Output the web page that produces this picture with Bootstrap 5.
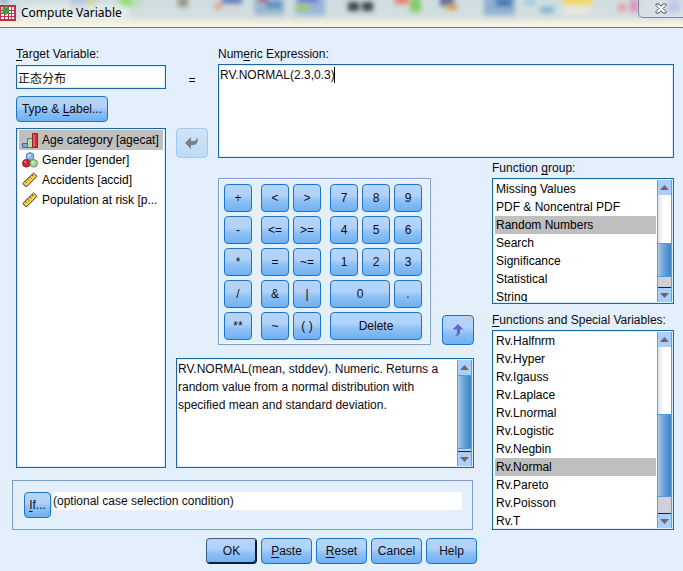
<!DOCTYPE html>
<html lang="en">
<head>
<meta charset="utf-8">
<meta name="viewport" content="width=device-width, initial-scale=1">
<title>Compute Variable</title>
<link href="https://cdn.jsdelivr.net/npm/bootstrap@5.3.0/dist/css/bootstrap.min.css" rel="stylesheet">
<style>
  :root { --edge: #1f64a3; --soft-edge: #7f9fc6; --face-edge: #1c75c9; --ink: #0b0b14; }
  body { background: #e3effb; color: var(--ink); font: 12px/16px "Liberation Sans", "Noto Sans CJK SC", sans-serif; }
  .titlebar { height: 28px; border-bottom: 1px solid #6f7479; background: linear-gradient(#cfdde0 0, #d3dfdf 60%, #f3f2e0 88%, #fbf8e4 100%); }
  .titlebar .scene { inset: 0; width: 100%; height: 100%; }
  .titlebar h1 { font: 12px/18px "Noto Sans", "Open Sans", sans-serif; margin-left: 5px; }
  .close-btn { width: 46px; height: 18px; margin-right: -1px; border: 1px solid #85839a; border-top: 0; border-radius: 0 0 0 5px; background: #dfe3f166; }
  .form-area { display: grid; grid-template-columns: 150px minmax(0, 1fr) 182px; padding: 18px 9px 8px 16px; }
  .col-left { grid-row: 1 / 3; }
  .expr-row { grid-column: 2 / 4; padding-left: 10px; gap: 10px; }
  .mid-part { padding: 20px 18px 0 10px; }
  .right-part { grid-row: 2 / 4; grid-column: 3; padding-top: 2px; }
  .if-panel { grid-column: 1 / 3; margin: 12px 19px 0 -4px; height: 50px; padding: 11px 10px 0 11px; border: 1px solid var(--soft-edge); }
  .box { background: #fff; border: 1px solid var(--edge); box-shadow: inset 0 0 0 1px #d5f0fd; border-radius: 0; }
  .edit { padding: 1px; font: inherit; color: inherit; resize: none; outline: 0; }
  .field-label { margin-bottom: 2px; }
  .target { height: 24px; margin-top: 1px; }
  .expr { height: 94px; line-height: 18px; }
  .caret { left: 116px; top: 3px; width: 1px; height: 16px; background: #000; }
  .face { --bs-btn-color: var(--ink); --bs-btn-hover-color: var(--ink); --bs-btn-border-color: var(--face-edge); --bs-btn-padding-x: 0; --bs-btn-padding-y: 0; --bs-btn-font-size: 12px; --bs-btn-line-height: 16px; --bs-btn-border-radius: 4px;
    height: 26px; background: linear-gradient(#b5d5f8 0, #b0d2fa 40%, #8dbff4 62%, #6db1f2 100%); }
  .face.key { height: 28px; }
  .face.arrow { width: 32px; height: 30px; }
  .face.arrow:disabled { opacity: 1; border-color: #a3c6ec; background: linear-gradient(#d0e3f8, #c0dbf6); }
  .face.primary { border-color: #4b5a78 #0d1b33 #0d1b33 #34608f; box-shadow: inset -1px -1px 0 #0d1b33; }
  .type-btn { width: 92px; margin-top: 7px; }
  .if-btn { width: 27px; }
  .equals { padding-bottom: 40px; }
  .var-list { margin-top: 6px; height: 340px; padding: 1px 2px; }
  .var-list button { height: 20px; padding-left: 3px; gap: 4px; }
  .pick { display: block; width: 100%; border: 0; background: none; text-align: left; white-space: nowrap; overflow: hidden; padding: 0 1px; }
  .pick.on { background: #bfbfbf; }
  .keypad { border: 1px solid var(--soft-edge); box-shadow: inset 0 0 0 1px #f1f8fe; padding: 5px 8px 4px 5px; gap: 9px; }
  .keys { display: grid; gap: 4px; grid-auto-rows: 28px; }
  .keys.one { grid-template-columns: 28px; }
  .keys.two { grid-template-columns: repeat(2, 28px); }
  .keys.three { grid-template-columns: repeat(3, 28px); }
  .span2 { grid-column: span 2; }
  .span3 { grid-column: span 3; }
  .mid-keys { gap: 11px; }
  .help { margin-top: 13px; height: 110px; line-height: 18px; padding: 1px 0 1px 1px; }
  .group-box { height: 126px; padding: 1px 0 1px 2px; }
  .func-box { height: 200px; padding: 1px 0 1px 2px; }
  .pick.fn { height: 18px; line-height: 18px; flex: none; }
  .sbar { width: 15px; margin-left: 1px; margin-right: 1px; border-left: 1px solid #58a3e2; border-right: 1px solid #58a3e2; flex: none; }
  .sbar button { height: 15px; border: 0; padding: 0; background: #a9cffa; display: flex; align-items: center; justify-content: center; flex: none; }
  .sbar .down { border-top: 1px solid #14263c; }
  .sbar .above { background: linear-gradient(90deg, #d7e0ea, #fff 40%); }
  .sbar .thumb { background: linear-gradient(90deg, #a6c9e8, #6fa8dc 40%, #3d83c4); border: 1px solid #4f9be2; border-width: 1px 0; }
  .sbar .below { background: #d0d0da; }
  .g49 { flex: 49 0 0; } .g33 { flex: 33 0 0; } .g10 { flex: 10 0 0; }
  .g68 { flex: 68 0 0; } .g82 { flex: 82 0 0; } .g16 { flex: 16 0 0; } .g2 { flex: 0 0 2px; }
  .second { margin-top: 8px; }
  .cap { margin-bottom: 2px; white-space: nowrap; }
  .cond { height: 18px; line-height: 18px; background: #fff; border: 0; padding: 0; margin-left: 2px; font-size: 12px; color: inherit; min-width: 0; }
  .actions { gap: 4px; padding-bottom: 7px; }
  .actions .face { width: 51px; }
  u { text-underline-offset: 2px; }
</style>
</head>
<body>
<header class="titlebar position-relative overflow-hidden d-flex align-items-start">
  <svg class="scene position-absolute" viewBox="0 0 683 27" preserveAspectRatio="none" aria-hidden="true">
    <defs><filter id="soft" x="-20%" y="-80%" width="140%" height="260%"><feGaussianBlur stdDeviation="2.5"/></filter></defs>
    <g filter="url(#soft)">
      <rect x="0" y="-4" width="8" height="8" fill="#9fb0d0"/>
      <rect x="70" y="-4" width="18" height="18" fill="#b5c9dc"/><rect x="86" y="-2" width="10" height="8" fill="#cfd39a"/>
      <rect x="120" y="-4" width="12" height="11" fill="#90e070"/><rect x="134" y="-2" width="8" height="8" fill="#b8dcb0"/>
      <rect x="178" y="-4" width="10" height="11" fill="#9c9484"/>
      <rect x="215" y="3" width="7" height="6" fill="#e89a88"/><rect x="222" y="-3" width="20" height="7" fill="#5078b8"/><rect x="224" y="4" width="17" height="10" fill="#d8d8dc"/>
      <rect x="254" y="-3" width="30" height="18" fill="#9cb8ce"/><rect x="266" y="2" width="16" height="6" fill="#4e88c8"/><rect x="258" y="-4" width="10" height="6" fill="#b04870"/>
      <rect x="295" y="-3" width="30" height="18" fill="#98b6dc"/><rect x="296" y="4" width="14" height="7" fill="#a0cc50"/><rect x="298" y="-4" width="20" height="6" fill="#5a68d0"/>
      <rect x="348" y="2" width="11" height="9" fill="#394349"/><rect x="362" y="2" width="11" height="9" fill="#394349"/>
      <rect x="395" y="-3" width="14" height="7" fill="#f07868"/><rect x="410" y="-2" width="11" height="14" fill="#80cc68"/>
      <rect x="440" y="-4" width="14" height="10" fill="#587098"/><rect x="446" y="4" width="11" height="6" fill="#d0a058"/>
      <rect x="484" y="-4" width="31" height="19" fill="#8fb0cf"/><rect x="496" y="-1" width="16" height="7" fill="#336eb0"/>
      <rect x="524" y="0" width="12" height="5" fill="#a0c8dc"/><rect x="540" y="7" width="14" height="6" fill="#80b4d0"/>
      <rect x="563" y="-4" width="29" height="9" fill="#f0d860"/><rect x="564" y="6" width="27" height="9" fill="#e8e6de"/>
      <rect x="618" y="4" width="8" height="7" fill="#ec98a4"/><rect x="630" y="0" width="8" height="12" fill="#d890c0"/>
      <rect x="668" y="0" width="12" height="12" fill="#a8b8e4"/>
    </g>
    <rect x="20" y="5" width="110" height="18" rx="8" fill="#f2f5f2" opacity=".55" filter="url(#soft)"/>
  </svg>
  <svg class="position-relative mt-1 flex-shrink-0" width="16" height="18" viewBox="0 0 16 18" aria-hidden="true">
    <rect x="0" y="1" width="16" height="16" fill="#c0304c"/>
    <path fill="#fff" d="M1 3h3v3H1zM5 3h3v3H5zM9 3h2v3H9zM12 3h2v3h-2zM1 7h3v2H1zM5 7h3v2H5zM9 7h2v2H9zM12 7h2v2h-2zM1 10h3v2H1zM5 10h3v2H5zM9 10h2v2H9zM12 10h2v2h-2zM1 13h3v2H1zM5 13h3v2H5zM9 13h2v2H9zM12 13h2v2h-2z"/>
    <path d="M5.500 2v9M1 6.500h9M2.500 3.500l6 6M8.500 3.500l-6 6" stroke="#4b9a3c" stroke-width="1.800"/>
  </svg>
  <h1 class="position-relative mb-0 text-black pt-1">Compute Variable</h1>
  <button class="close-btn position-relative ms-auto p-0 d-flex justify-content-center align-items-center" type="button" aria-label="Close">
    <svg width="12" height="11" viewBox="0 0 12 11" aria-hidden="true"><path d="M1 1h3l2 2.300L8 1h3v1.500L8 5.500l3 3V10H8L6 7.700 4 10H1V8.500l3-3-3-3z" fill="#fff" stroke="#4c5062"/></svg>
  </button>
</header>

<main>
  <form class="form-area">
    <section class="col-left d-flex flex-column align-items-stretch">
      <label class="field-label" for="target"><u>T</u>arget Variable:</label>
      <input id="target" class="box edit target w-100" value="正态分布">
      <button class="btn face type-btn" type="button">Type &amp; <u>L</u>abel...</button>
      <div class="box var-list" role="listbox" aria-label="Variables">
        <button class="pick on d-flex align-items-center" type="button" role="option" aria-selected="true">
          <svg width="16" height="16" viewBox="0 0 16 16" aria-hidden="true"><path d="M.5 11.500h5v4h-5z" fill="#7fa8d8" stroke="#45658f"/><path d="M5.500 6.500h5v9h-5z" fill="#b7dca0" stroke="#5c7e4c"/><path d="M10.500 1.500h5v14h-5z" fill="#d03038" stroke="#8e2030"/><path d="M12 2.500v12" stroke="#f09090"/></svg>
          <span>Age category [agecat]</span></button>
        <button class="pick d-flex align-items-center" type="button" role="option">
          <svg width="16" height="16" viewBox="0 0 16 16" aria-hidden="true"><circle cx="8" cy="4.500" r="3.800" fill="#8db8ee" stroke="#4678b8"/><circle cx="4.300" cy="11.300" r="3.800" fill="#cc2638" stroke="#8e1c2c"/><circle cx="11.700" cy="11.300" r="3.800" fill="#a5d69a" stroke="#5a9254"/><circle cx="7" cy="3.500" r="1.300" fill="#d2e5fc"/><circle cx="3.300" cy="10" r="1" fill="#f08a90"/><circle cx="10.700" cy="10.200" r="1.200" fill="#d9f3d0"/></svg>
          <span>Gender [gender]</span></button>
        <button class="pick d-flex align-items-center" type="button" role="option">
          <svg width="16" height="16" viewBox="0 0 16 16" aria-hidden="true"><path d="M.8 11.500L11.500 1l3.500 3.300L4.300 15z" fill="#fbd04e" stroke="#3c3010"/><path d="M3.500 9.500l1.200 1.200M5.700 7.400l1.200 1.200M7.900 5.200l1.200 1.200M10.100 3l1.200 1.200" stroke="#3c3010"/></svg>
          <span>Accidents [accid]</span></button>
        <button class="pick d-flex align-items-center" type="button" role="option">
          <svg width="16" height="16" viewBox="0 0 16 16" aria-hidden="true"><path d="M.8 11.500L11.500 1l3.500 3.300L4.300 15z" fill="#fbd04e" stroke="#3c3010"/><path d="M3.500 9.500l1.200 1.200M5.700 7.400l1.200 1.200M7.900 5.200l1.200 1.200M10.100 3l1.200 1.200" stroke="#3c3010"/></svg>
          <span>Population at risk [p...</span></button>
      </div>
    </section>

    <section class="expr-row d-flex">
      <div class="d-flex flex-column align-items-center justify-content-end">
        <span class="equals">=</span>
        <button class="btn face arrow d-flex align-items-center justify-content-center" type="button" disabled aria-label="Move variable to expression">
          <svg width="16" height="14" viewBox="0 0 16 14" aria-hidden="true"><path d="M1 7l6-6v4h2.500c2 0 3-1 4-3.500 1 4-.5 7.500-4 7.500H7v4z" fill="#7d7f86"/></svg>
        </button>
      </div>
      <div class="flex-grow-1 d-flex flex-column">
        <label class="field-label" for="expr">Num<u>e</u>ric Expression:</label>
        <div class="position-relative d-flex">
          <textarea id="expr" class="box edit expr w-100">RV.NORMAL(2.3,0.3)</textarea>
          <span class="caret position-absolute"></span>
        </div>
      </div>
    </section>

    <section class="mid-part d-flex flex-column">
      <div class="mid-keys d-flex justify-content-end align-items-end">
        <div class="keypad d-flex">
          <div class="keys one">
            <button class="btn face key" type="button">+</button><button class="btn face key" type="button">-</button><button class="btn face key" type="button">*</button><button class="btn face key" type="button">/</button><button class="btn face key" type="button">**</button>
          </div>
          <div class="keys two">
            <button class="btn face key" type="button">&lt;</button><button class="btn face key" type="button">&gt;</button>
            <button class="btn face key" type="button">&lt;=</button><button class="btn face key" type="button">&gt;=</button>
            <button class="btn face key" type="button">=</button><button class="btn face key" type="button">~=</button>
            <button class="btn face key" type="button">&amp;</button><button class="btn face key" type="button">|</button>
            <button class="btn face key" type="button">~</button><button class="btn face key" type="button">( )</button>
          </div>
          <div class="keys three">
            <button class="btn face key" type="button">7</button><button class="btn face key" type="button">8</button><button class="btn face key" type="button">9</button>
            <button class="btn face key" type="button">4</button><button class="btn face key" type="button">5</button><button class="btn face key" type="button">6</button>
            <button class="btn face key" type="button">1</button><button class="btn face key" type="button">2</button><button class="btn face key" type="button">3</button>
            <button class="btn face key span2" type="button">0</button><button class="btn face key" type="button">.</button>
            <button class="btn face key span3" type="button">Delete</button>
          </div>
        </div>
        <button class="btn face arrow d-flex align-items-center justify-content-center" type="button" aria-label="Insert function">
          <svg width="12" height="14" viewBox="0 0 12 14" aria-hidden="true"><path d="M6 1l5.500 5.500H8V9c0 2.500-2 4-5.500 4C4.500 12 5 11 5 9.500v-3H.5z" fill="#6a5fc8"/></svg>
        </button>
      </div>
      <div class="box help d-flex">
        <p class="mb-0 flex-grow-1">RV.NORMAL(mean, stddev). Numeric. Returns a random value from a normal distribution with specified mean and standard deviation.</p>
        <div class="sbar d-flex flex-column">
          <button type="button" aria-label="Scroll up"><svg width="9" height="5" viewBox="0 0 9 5"><path d="M0 5L4.500 0 9 5z" fill="#6b6670"/></svg></button>
          <div class="thumb g82"></div><div class="below g2"></div>
          <button class="down" type="button" aria-label="Scroll down"><svg width="9" height="5" viewBox="0 0 9 5"><path d="M0 0h9L4.500 5z" fill="#6b6670"/></svg></button>
        </div>
      </div>
    </section>

    <section class="right-part d-flex flex-column">
      <div class="cap">Function <u>g</u>roup:</div>
      <div class="box group-box d-flex">
        <div class="flex-grow-1 overflow-hidden d-flex flex-column" role="listbox" aria-label="Function group">
          <button class="pick fn" type="button" role="option">Missing Values</button>
          <button class="pick fn" type="button" role="option">PDF &amp; Noncentral PDF</button>
          <button class="pick fn on" type="button" role="option" aria-selected="true">Random Numbers</button>
          <button class="pick fn" type="button" role="option">Search</button>
          <button class="pick fn" type="button" role="option">Significance</button>
          <button class="pick fn" type="button" role="option">Statistical</button>
          <button class="pick fn" type="button" role="option">String</button>
        </div>
        <div class="sbar d-flex flex-column">
          <button type="button" aria-label="Scroll up"><svg width="9" height="5" viewBox="0 0 9 5"><path d="M0 5L4.500 0 9 5z" fill="#6b6670"/></svg></button>
          <div class="above g49"></div><div class="thumb g33"></div><div class="below g10"></div>
          <button class="down" type="button" aria-label="Scroll down"><svg width="9" height="5" viewBox="0 0 9 5"><path d="M0 0h9L4.500 5z" fill="#6b6670"/></svg></button>
        </div>
      </div>
      <div class="cap second"><u>F</u>unctions and Special Variables:</div>
      <div class="box func-box d-flex">
        <div class="flex-grow-1 overflow-hidden d-flex flex-column" role="listbox" aria-label="Functions and Special Variables">
          <button class="pick fn" type="button" role="option">Rv.Halfnrm</button>
          <button class="pick fn" type="button" role="option">Rv.Hyper</button>
          <button class="pick fn" type="button" role="option">Rv.Igauss</button>
          <button class="pick fn" type="button" role="option">Rv.Laplace</button>
          <button class="pick fn" type="button" role="option">Rv.Lnormal</button>
          <button class="pick fn" type="button" role="option">Rv.Logistic</button>
          <button class="pick fn" type="button" role="option">Rv.Negbin</button>
          <button class="pick fn on" type="button" role="option" aria-selected="true">Rv.Normal</button>
          <button class="pick fn" type="button" role="option">Rv.Pareto</button>
          <button class="pick fn" type="button" role="option">Rv.Poisson</button>
          <button class="pick fn" type="button" role="option">Rv.T</button>
        </div>
        <div class="sbar d-flex flex-column">
          <button type="button" aria-label="Scroll up"><svg width="9" height="5" viewBox="0 0 9 5"><path d="M0 5L4.500 0 9 5z" fill="#6b6670"/></svg></button>
          <div class="above g68"></div><div class="thumb g82"></div><div class="below g16"></div>
          <button class="down" type="button" aria-label="Scroll down"><svg width="9" height="5" viewBox="0 0 9 5"><path d="M0 0h9L4.500 5z" fill="#6b6670"/></svg></button>
        </div>
      </div>
    </section>

    <section class="if-panel d-flex align-items-start">
      <button class="btn face if-btn flex-shrink-0" type="button"><u>I</u>f...</button>
      <input class="cond flex-grow-1" aria-label="Case selection condition" value="(optional case selection condition)" readonly>
    </section>
  </form>
  <div class="actions d-flex justify-content-center">
    <button class="btn face primary" type="button">OK</button>
    <button class="btn face" type="button"><u>P</u>aste</button>
    <button class="btn face" type="button"><u>R</u>eset</button>
    <button class="btn face" type="button">Cancel</button>
    <button class="btn face" type="button">Help</button>
  </div>
</main>
<script src="https://cdn.jsdelivr.net/npm/bootstrap@5.3.0/dist/js/bootstrap.bundle.min.js"></script>
</body>
</html>
